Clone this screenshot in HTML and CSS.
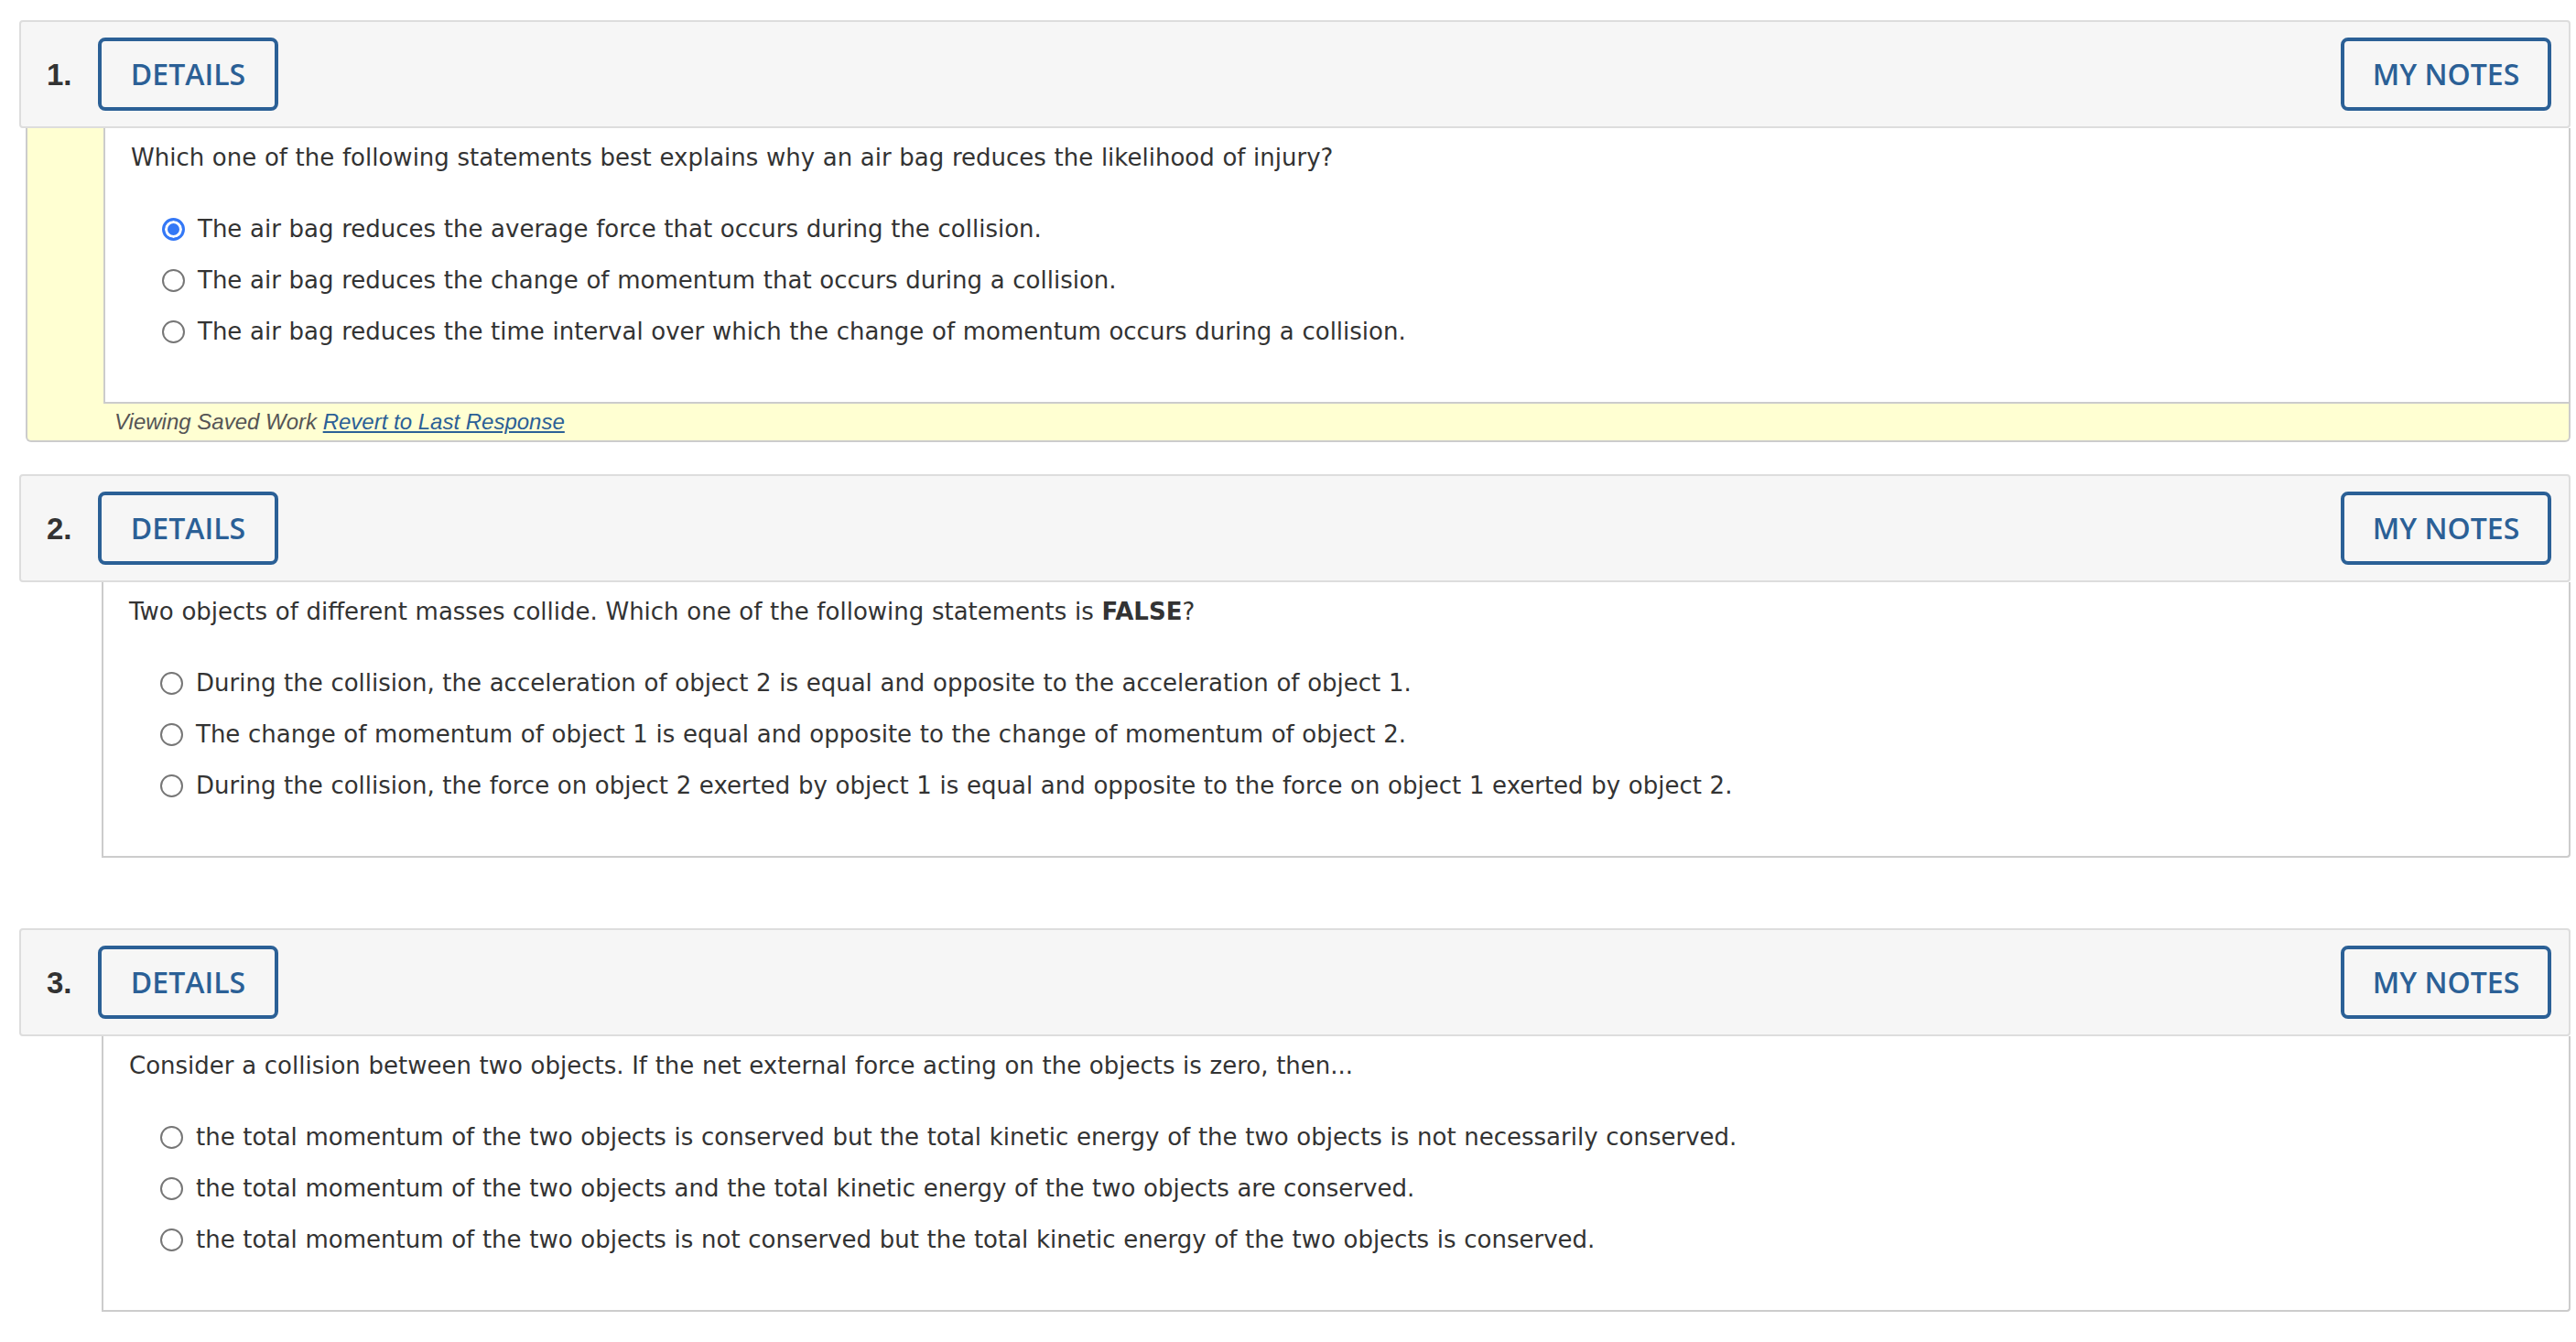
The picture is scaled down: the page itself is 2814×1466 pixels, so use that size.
FILE: index.html
```html
<!DOCTYPE html>
<html lang="en">
<head>
<meta charset="utf-8">
<title>Assignment</title>
<link rel="stylesheet" href="styles.css">
</head>
<body>
<div class="page">

  <section class="q">
    <header class="q-head">
      <span class="q-num">1.</span>
      <button class="btn btn-details">DETAILS</button>
      <button class="btn btn-notes">MY NOTES</button>
    </header>
    <div class="q-wrap saved">
      <div class="q-body">
        <p class="q-text">Which one of the following statements best explains why an air bag reduces the likelihood of injury?</p>
        <ul class="opts">
          <li><label class="opt"><input type="radio" name="q1" checked><span>The air bag reduces the average force that occurs during the collision.</span></label></li>
          <li><label class="opt"><input type="radio" name="q1"><span>The air bag reduces the change of momentum that occurs during a collision.</span></label></li>
          <li><label class="opt"><input type="radio" name="q1"><span>The air bag reduces the time interval over which the change of momentum occurs during a collision.</span></label></li>
        </ul>
      </div>
      <div class="q-foot"><em>Viewing Saved Work</em> <a href="#">Revert to Last Response</a></div>
    </div>
  </section>

  <section class="q">
    <header class="q-head">
      <span class="q-num">2.</span>
      <button class="btn btn-details">DETAILS</button>
      <button class="btn btn-notes">MY NOTES</button>
    </header>
    <div class="q-wrap">
      <div class="q-body">
        <p class="q-text">Two objects of different masses collide. Which one of the following statements is <b>FALSE</b>?</p>
        <ul class="opts">
          <li><label class="opt"><input type="radio" name="q2"><span>During the collision, the acceleration of object 2 is equal and opposite to the acceleration of object 1.</span></label></li>
          <li><label class="opt"><input type="radio" name="q2"><span>The change of momentum of object 1 is equal and opposite to the change of momentum of object 2.</span></label></li>
          <li><label class="opt"><input type="radio" name="q2"><span>During the collision, the force on object 2 exerted by object 1 is equal and opposite to the force on object 1 exerted by object 2.</span></label></li>
        </ul>
      </div>
      <div class="q-foot"></div>
    </div>
  </section>

  <section class="q">
    <header class="q-head">
      <span class="q-num">3.</span>
      <button class="btn btn-details">DETAILS</button>
      <button class="btn btn-notes">MY NOTES</button>
    </header>
    <div class="q-wrap">
      <div class="q-body">
        <p class="q-text">Consider a collision between two objects. If the net external force acting on the objects is zero, then...</p>
        <ul class="opts">
          <li><label class="opt"><input type="radio" name="q3"><span>the total momentum of the two objects is conserved but the total kinetic energy of the two objects is not necessarily conserved.</span></label></li>
          <li><label class="opt"><input type="radio" name="q3"><span>the total momentum of the two objects and the total kinetic energy of the two objects are conserved.</span></label></li>
          <li><label class="opt"><input type="radio" name="q3"><span>the total momentum of the two objects is not conserved but the total kinetic energy of the two objects is conserved.</span></label></li>
        </ul>
      </div>
      <div class="q-foot"></div>
    </div>
  </section>

</div>
</body>
</html>
```

FILE: styles.css
```css
html {
  scrollbar-width: none;
}

body {
  margin: 0;
  background: #ffffff;
  color: #333333;
  font-family: "DejaVu Sans", Verdana, sans-serif;
}

.page {
  padding: 22px 6px 0 21px;
}

.q {
  margin-bottom: 35px;
}

.q-head {
  display: flex;
  align-items: center;
  padding: 17px 19px 17px 28px;
  background: #f6f6f6;
  border: 2px solid #dddddd;
  border-radius: 4px;
}

.q-num {
  width: 56px;
  font-family: "Liberation Sans", Arial, sans-serif;
  font-weight: 700;
  font-size: 33px;
  line-height: 1;
  color: #333333;
}

.btn {
  box-sizing: border-box;
  height: 80px;
  padding: 0;
  border: 4px solid #2b6096;
  border-radius: 8px;
  background: transparent;
  color: #2b6096;
  font-family: "Open Sans", sans-serif;
  font-weight: 600;
  font-size: 32px;
  line-height: 1;
  text-align: center;
}

.btn-details {
  width: 197px;
}

.btn-notes {
  width: 230px;
  margin-left: auto;
}

.q-wrap {
  margin-left: 7px;
  border-bottom: 2px solid transparent;
}

.q-wrap.saved {
  background: #ffffd2;
  border: 2px solid #cccccc;
  border-top: none;
  border-radius: 0 0 6px 6px;
}

.q-body {
  margin-left: 83px;
  padding: 13px 0 49px 28px;
  background: #ffffff;
  border-left: 2px solid #cccccc;
  border-right: 2px solid #cccccc;
  border-bottom: 2px solid #cccccc;
  border-radius: 0 0 4px 0;
}

.saved .q-body {
  border-right: none;
  border-radius: 0;
}

.q-text {
  margin: 0 0 30px;
  font-size: 26px;
  line-height: 39px;
  word-spacing: 0.4px;
}

.q-text b {
  font-weight: 700;
}

.opts {
  list-style: none;
  margin: 0;
  padding: 0 0 0 34px;
}

.opt {
  display: flex;
  align-items: center;
  height: 56px;
  font-size: 26px;
  line-height: 56px;
  word-spacing: 0.4px;
  white-space: nowrap;
}

.opt input {
  appearance: none;
  -webkit-appearance: none;
  flex: none;
  box-sizing: border-box;
  width: 25px;
  height: 25px;
  margin: 0 14px 0 0;
  border: 2px solid #767676;
  border-radius: 50%;
  background: #ffffff;
}

.opt input:checked {
  border: 3px solid #3478f6;
  background: #3478f6;
  box-shadow: inset 0 0 0 3px #ffffff;
}

.q-foot {
  height: 40px;
  padding-left: 95px;
  font-family: "Liberation Sans", Arial, sans-serif;
  font-style: italic;
  font-size: 24px;
  line-height: 40px;
  color: #555555;
}

.q-foot em {
  font-style: italic;
}

.q-foot a {
  color: #2b6096;
  text-decoration: underline;
}
```
